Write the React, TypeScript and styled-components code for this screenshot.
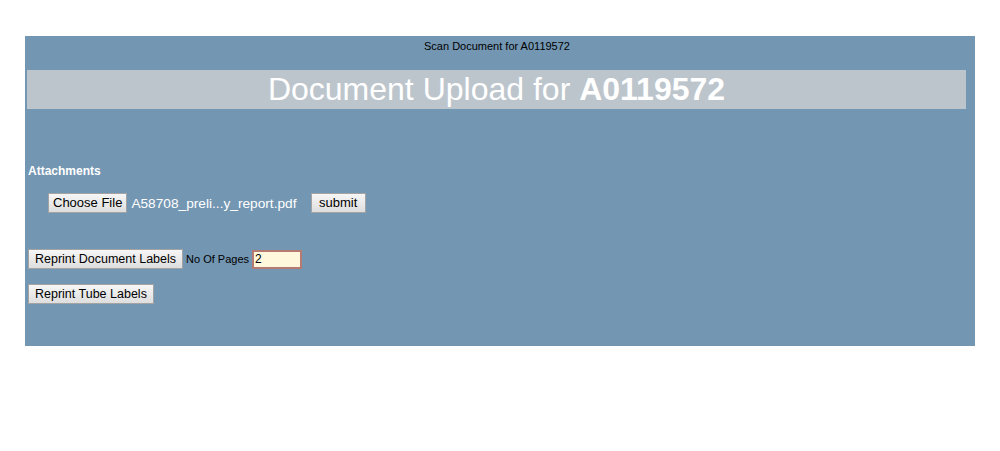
import React from 'react';
import styled, { createGlobalStyle } from 'styled-components';

const GlobalStyle = createGlobalStyle`
  body {
    margin: 0;
    background: #ffffff;
    font-family: "Liberation Sans", Arial, sans-serif;
  }
`;

const Page = styled.div`
  padding: 36px 25px;
`;

const Panel = styled.div`
  width: 950px;
  height: 310px;
  box-sizing: border-box;
  background: #7396b2;
  padding-top: 3px;
`;

const Caption = styled.div`
  font-size: 11px;
  line-height: 14px;
  color: #000000;
  text-align: center;
  margin-left: -6px;
`;

const TitleBar = styled.h1`
  margin: 17px 0 0 2px;
  width: 939px;
  height: 39px;
  background: #bdc5cc;
  color: #ffffff;
  font-size: 32px;
  font-weight: normal;
  line-height: 39px;
  text-align: center;
  b {
    font-weight: bold;
  }
`;

const SectionLabel = styled.div`
  margin: 55px 0 0 3px;
  font-size: 12px;
  line-height: 14px;
  font-weight: bold;
  color: #ffffff;
`;

const Row = styled.div<{ $indent?: number; $top: number }>`
  display: flex;
  align-items: center;
  margin-top: ${(p) => p.$top}px;
  margin-left: ${(p) => p.$indent ?? 3}px;
  height: 20px;
`;

const Button = styled.button<{ $size?: number; $pad?: number }>`
  height: 20px;
  padding: 0 ${(p) => p.$pad ?? 6}px;
  box-sizing: border-box;
  border: 1px solid #a3a3a3;
  border-radius: 0;
  background: linear-gradient(#f6f6f6, #dedede);
  color: #000000;
  font-family: "Liberation Sans", Arial, sans-serif;
  font-size: ${(p) => p.$size ?? 12.5}px;
  line-height: 18px;
  cursor: pointer;
`;

const FileName = styled.span`
  margin: 0 14px 0 4px;
  color: #ffffff;
  font-size: 13.7px;
`;

const FieldLabel = styled.span`
  margin: 0 3px 0 3px;
  font-size: 11px;
  color: #000000;
`;

const PagesInput = styled.input`
  width: 50px;
  height: 19px;
  box-sizing: border-box;
  padding: 0 1px;
  border: 2px solid #b57a72;
  background: #fff8dc;
  font-family: "Liberation Sans", Arial, sans-serif;
  font-size: 12px;
  outline: none;
`;

export default function App() {
  return (
    <>
      <GlobalStyle />
      <Page>
        <Panel>
          <Caption>Scan Document for A0119572</Caption>
          <TitleBar>
            Document Upload for <b>A0119572</b>
          </TitleBar>
          <SectionLabel>Attachments</SectionLabel>
          <Row $indent={23} $top={15}>
            <Button $size={13} $pad={4}>Choose File</Button>
            <FileName>A58708_preli...y_report.pdf</FileName>
            <Button $size={13} $pad={7.5}>submit</Button>
          </Row>
          <Row $top={36}>
            <Button>Reprint Document Labels</Button>
            <FieldLabel>No Of Pages</FieldLabel>
            <PagesInput defaultValue="2" />
          </Row>
          <Row $top={15}>
            <Button>Reprint Tube Labels</Button>
          </Row>
        </Panel>
      </Page>
    </>
  );
}
